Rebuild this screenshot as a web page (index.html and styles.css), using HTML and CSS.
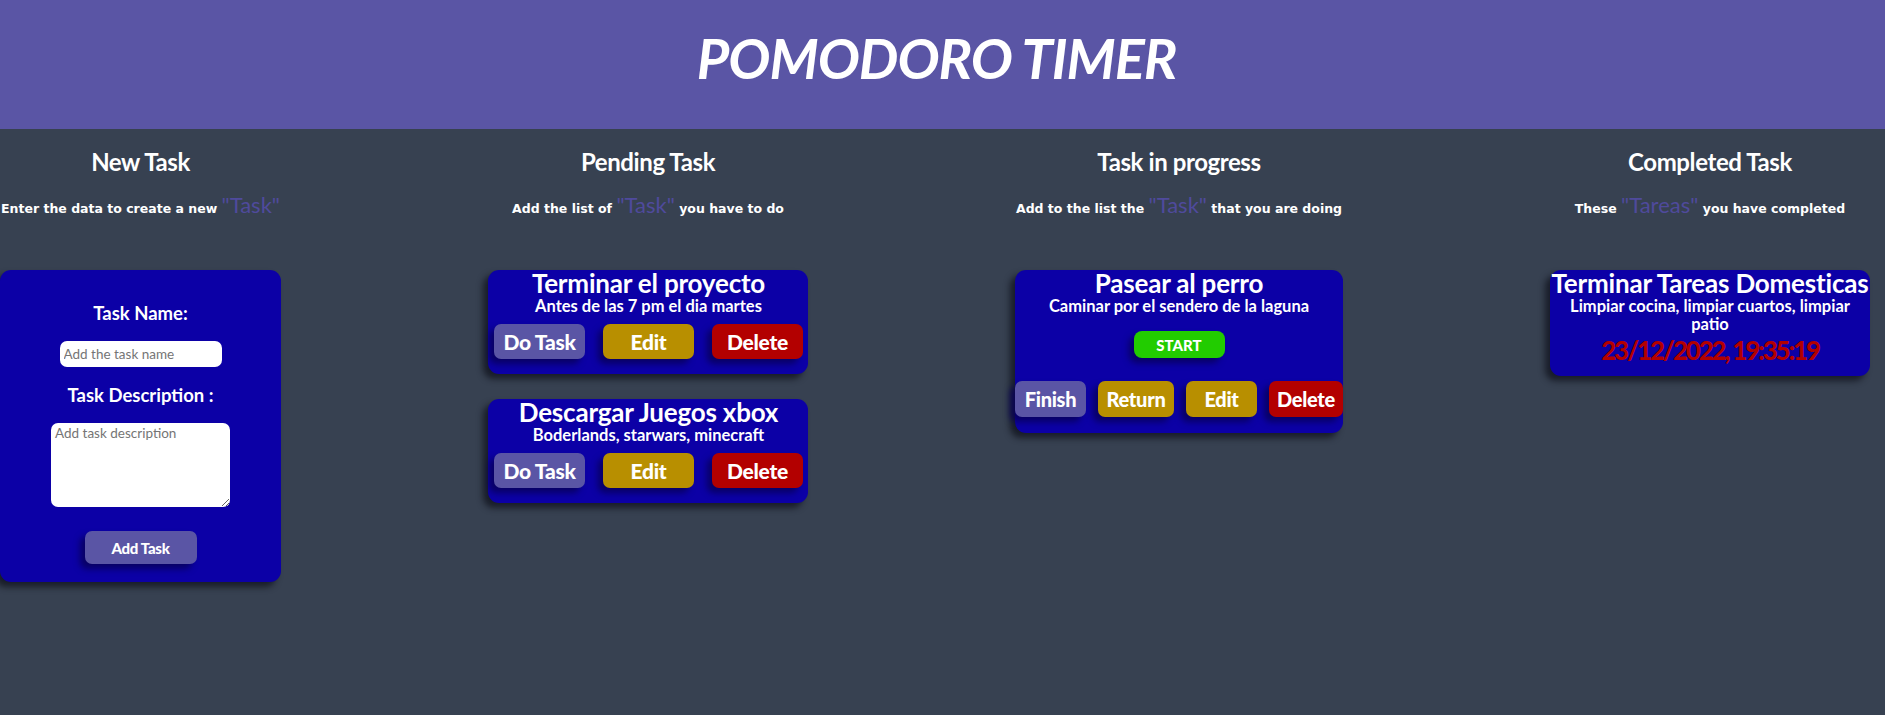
FILE: index.html
```html
<!DOCTYPE html>
<html lang="en">
<head>
<meta charset="utf-8">
<title>Pomodoro Timer</title>
<link rel="stylesheet" href="styles.css">
</head>
<body>
<header class="header">
  <h1 class="title">POMODORO TIMER</h1>
</header>
<main class="board">
  <section class="col col-new">
    <h2 class="col-title">New Task</h2>
    <p class="col-sub">Enter the data to create a new <span class="q">"Task"</span></p>
    <form class="new-card">
      <label class="lbl">Task Name:</label>
      <input class="inp" type="text" placeholder="Add the task name">
      <label class="lbl">Task Description :</label>
      <textarea class="txt" placeholder="Add task description"></textarea>
      <button type="button" class="btn btn-add">Add Task</button>
    </form>
  </section>

  <section class="col col-pending">
    <h2 class="col-title">Pending Task</h2>
    <p class="col-sub">Add the list of <span class="q">"Task"</span> you have to do</p>
    <div class="list">
      <div class="card">
        <h3 class="card-title">Terminar el proyecto</h3>
        <p class="card-desc">Antes de las 7 pm el dia martes</p>
        <div class="actions">
          <button class="btn btn-purple">Do Task</button>
          <button class="btn btn-gold">Edit</button>
          <button class="btn btn-red">Delete</button>
        </div>
      </div>
      <div class="card">
        <h3 class="card-title">Descargar Juegos xbox</h3>
        <p class="card-desc">Boderlands, starwars, minecraft</p>
        <div class="actions">
          <button class="btn btn-purple">Do Task</button>
          <button class="btn btn-gold">Edit</button>
          <button class="btn btn-red">Delete</button>
        </div>
      </div>
    </div>
  </section>

  <section class="col col-progress">
    <h2 class="col-title">Task in progress</h2>
    <p class="col-sub">Add to the list the <span class="q">"Task"</span> that you are doing</p>
    <div class="list">
      <div class="card card-progress">
        <h3 class="card-title">Pasear al perro</h3>
        <p class="card-desc">Caminar por el sendero de la laguna</p>
        <button class="btn btn-start">START</button>
        <div class="actions actions-4">
          <button class="btn btn-purple b-finish">Finish</button>
          <button class="btn btn-gold b-return">Return</button>
          <button class="btn btn-gold b-edit">Edit</button>
          <button class="btn btn-red b-delete">Delete</button>
        </div>
      </div>
    </div>
  </section>

  <section class="col col-done">
    <h2 class="col-title">Completed Task</h2>
    <p class="col-sub">These <span class="q">"Tareas"</span> you have completed</p>
    <div class="list">
      <div class="card card-done">
        <h3 class="card-title">Terminar Tareas Domesticas</h3>
        <p class="card-desc">Limpiar cocina, limpiar cuartos, limpiar patio</p>
        <p class="date">23/12/2022, 19:35:19</p>
      </div>
    </div>
  </section>
</main>
</body>
</html>
```
FILE: styles.css
```css
* { box-sizing: border-box; }
html, body { margin: 0; padding: 0; }
body {
  background: #374151;
  font-family: "Lato", "Open Sans", sans-serif;
  color: #fff;
  min-height: 715px;
}
.header {
  background: #5a55a5;
  height: 129px;
  display: flex;
  align-items: flex-start;
  justify-content: center;
  padding-top: 24px;
}
.title {
  margin: 0;
  font-size: 56px;
  line-height: 1.2;
  font-weight: 700;
  font-style: italic;
  letter-spacing: -1px;
  color: #fff;
  transform: translateX(-6px);
}
.board {
  display: flex;
  gap: 207px;
  align-items: flex-start;
}
.col { display: flex; flex-direction: column; align-items: center; }
.col-new { width: 281px; }
.col-pending { width: 320px; }
.col-progress { width: 328px; }
.col-done { width: 320px; }
.col-title {
  margin: 18px 0 0;
  font-size: 24px;
  line-height: 30px;
  font-weight: 700;
  letter-spacing: -0.4px;
  white-space: nowrap;
}
.col-sub {
  margin: 18px 0 0;
  font-family: "DejaVu Sans", sans-serif;
  font-size: 12.5px;
  line-height: 20px;
  font-weight: 700;
  white-space: nowrap;
}
.q {
  font-family: "Lato", sans-serif;
  color: #4f4a9c;
  font-size: 22px;
  font-weight: 400;
}
.new-card {
  margin-top: 51px;
  width: 281px;
  height: 312px;
  background: #0c00a6;
  border-radius: 11px;
  box-shadow: -5px 5px 6px rgba(15, 18, 28, 0.75);
  display: flex;
  flex-direction: column;
  align-items: center;
  padding-top: 32px;
}
.lbl {
  font-size: 18.5px;
  font-weight: 700;
  line-height: 22px;
}
.inp {
  margin-top: 17px;
  width: 162px;
  height: 26px;
  border: none;
  border-radius: 7px;
  padding: 0 4px;
  font-family: "Lato", sans-serif;
  font-size: 13.5px;
  outline: none;
}
.inp + .lbl { margin-top: 17px; }
.txt {
  margin-top: 17px;
  width: 179px;
  height: 84px;
  border: none;
  border-radius: 7px;
  padding: 2px 4px;
  font-family: "Lato", sans-serif;
  font-size: 13.5px;
  resize: both;
}
.inp::placeholder, .txt::placeholder { color: #757575; }
.btn {
  border: none;
  color: #fff;
  font-family: "Lato", sans-serif;
  font-weight: 900;
  border-radius: 7px;
  box-shadow: -5px 5px 6px rgba(8, 0, 90, 0.85);
  cursor: pointer;
  padding: 0;
}
.btn-add {
  margin-top: 24px;
  width: 112px;
  height: 33px;
  background: #5a55a5;
  font-size: 15px;
  letter-spacing: -0.3px;
}
.list {
  margin-top: 51px;
  display: flex;
  flex-direction: column;
  gap: 25px;
  width: 100%;
}
.card {
  background: #0c00a6;
  border-radius: 11px;
  box-shadow: -5px 5px 6px rgba(15, 18, 28, 0.75);
  display: flex;
  flex-direction: column;
  align-items: center;
  padding: 0 5px 15px 6px;
}
.card-title {
  margin: 0;
  font-size: 26px;
  line-height: 27px;
  font-weight: 700;
  white-space: nowrap;
  letter-spacing: -0.2px;
}
.card-desc {
  margin: 0;
  font-size: 16.5px;
  line-height: 18px;
  font-weight: 700;
  text-align: center;
}
.actions {
  margin-top: 9px;
  width: 100%;
  display: flex;
  justify-content: space-between;
}
.actions .btn {
  width: 91px;
  height: 35px;
  font-size: 21px;
  letter-spacing: -0.3px;
}
.btn-purple { background: #5a55a5; }
.btn-gold { background: #b88f00; }
.btn-red { background: #b30000; }
.card-progress { padding: 0 0 16px; }
.btn-start {
  margin-top: 16px;
  width: 91px;
  height: 27px;
  background: #22cc00;
  font-size: 15px;
  border-radius: 8px;
}
.actions-4 { margin-top: 23px; }
.actions-4 .btn { height: 36px; font-size: 20px; }
.actions-4 .b-finish { width: 71px; }
.actions-4 .b-return { width: 76px; }
.actions-4 .b-edit { width: 71px; }
.actions-4 .b-delete { width: 74px; }
.card-done { padding: 0 0 12px; }
.card-done .card-desc { padding: 0 10px; }
.date {
  margin: 3px 0 0;
  color: #b30000;
  font-size: 26px;
  line-height: 28px;
  font-weight: 900;
  letter-spacing: -2.2px;
}
```
